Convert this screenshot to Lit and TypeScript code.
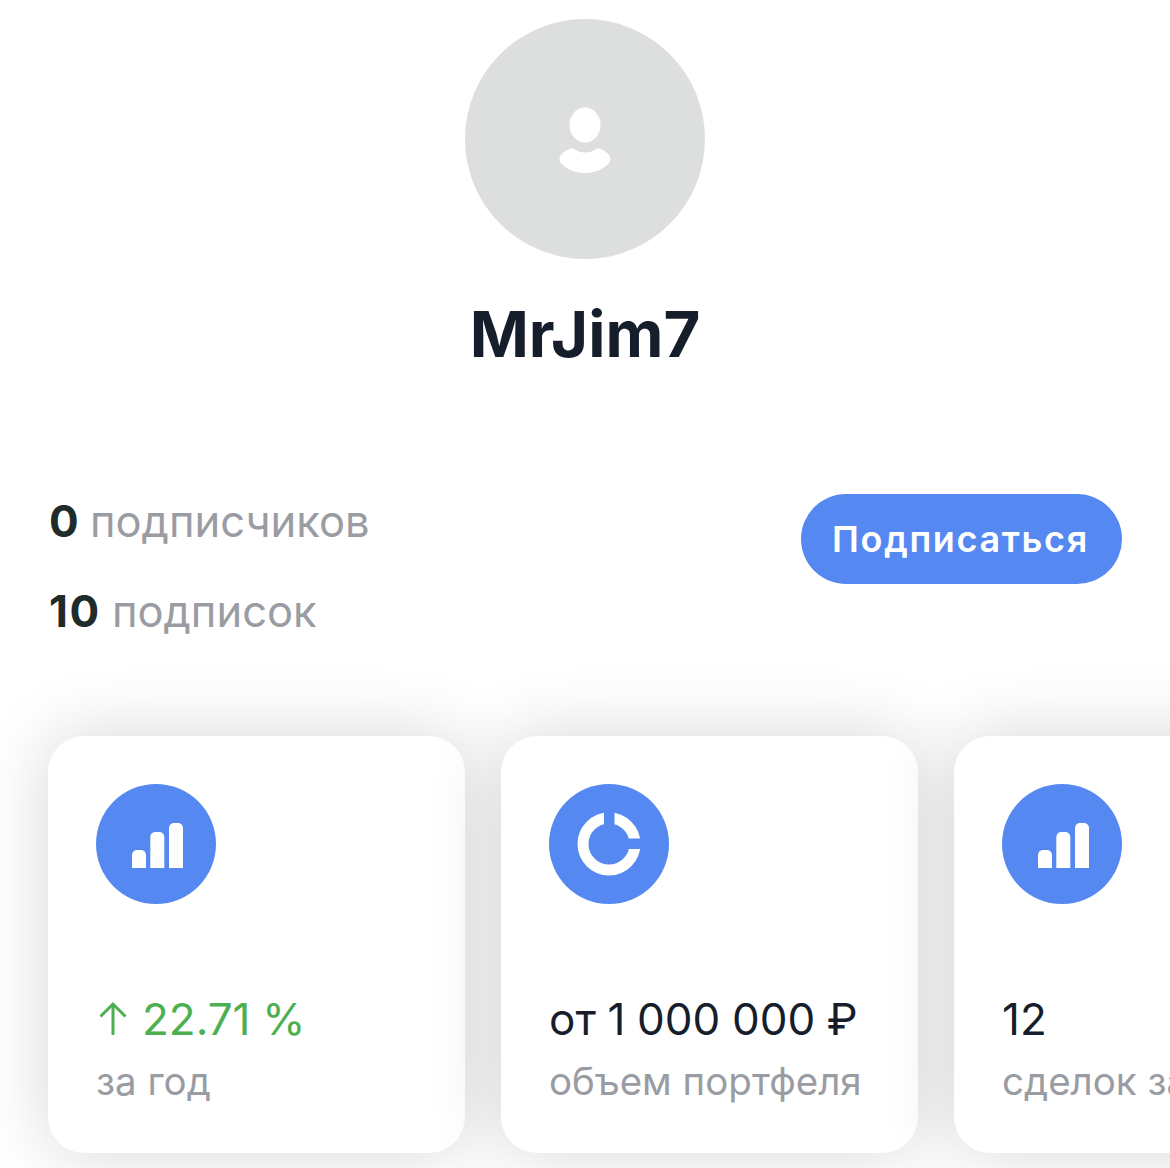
import { LitElement, html, css, svg } from 'lit';
import { customElement } from 'lit/decorators.js';

const barsIcon = svg`
  <path d="M36 84V71a5 5 0 0 1 5-5h4a5 5 0 0 1 5 5v13z" fill="#fff" />
  <path d="M54.300 84V53a5 5 0 0 1 5-5h4a5 5 0 0 1 5 5v31z" fill="#fff" />
  <path d="M73 84V44a5 5 0 0 1 5-5h4a5 5 0 0 1 5 5v40z" fill="#fff" />
`;

// ring with two square notches cut out in the background colour
const donutIcon = svg`
  <circle cx="60" cy="60" r="26" fill="none" stroke="#fff" stroke-width="11" />
  <rect x="55" y="20" width="10.500" height="26" fill="#5589f1" />
  <rect x="75" y="54.500" width="26" height="10.500" fill="#5589f1" />
`;

interface Stat {
  icon: unknown;
  value: string;
  label: string;
  up?: boolean;
}

const STATS: Stat[] = [
  { icon: barsIcon, value: '22.71 %', label: 'за год', up: true },
  { icon: donutIcon, value: 'от 1 000 000 ₽', label: 'объем портфеля' },
  { icon: barsIcon, value: '12', label: 'сделок за год' },
];

@customElement('app-root')
export class AppRoot extends LitElement {
  static styles = css`
    :host {
      display: block;
      width: 1170px;
      height: 1168px;
      overflow: hidden;
      background: #fff;
      font-family: Inter, 'Noto Sans', sans-serif;
    }
    .profile {
      display: flex;
      flex-direction: column;
      align-items: center;
      padding-top: 19px;
    }
    .avatar {
      width: 240px;
      height: 240px;
      border-radius: 50%;
      background: #dddfdf;
      display: flex;
      align-items: center;
      justify-content: center;
    }
    .avatar svg {
      margin-top: 3px;
    }
    .name {
      margin: 36px 0 0;
      font-size: 63.5px;
      line-height: 78px;
      font-weight: 700;
      color: #161d2b;
    }
    .follow {
      display: flex;
      justify-content: space-between;
      align-items: flex-start;
      padding: 0 48px 0 49px;
      margin-top: 121px;
    }
    .counts {
      display: flex;
      flex-direction: column;
      gap: 34px;
      margin-top: -1px;
    }
    .count {
      font-size: 43.5px;
      line-height: 56px;
      word-spacing: -1px;
      color: #9a9ca3;
    }
    .count b {
      font-size: 44px;
      font-weight: 700;
      color: #1f2c2a;
    }
    .count b.wide {
      letter-spacing: 1.5px;
    }
    .subscribe {
      width: 321px;
      height: 90px;
      padding: 0 2px 0 0;
      border: none;
      border-radius: 45px;
      background: #5589f1;
      color: #fff;
      font: 600 36px Inter, sans-serif;
      letter-spacing: 1.65px;
    }
    .cards {
      display: flex;
      gap: 36px;
      padding: 0 0 0 48px;
      margin-top: 97px;
    }
    .card {
      flex: none;
      box-sizing: border-box;
      width: 417px;
      height: 417px;
      padding: 48px;
      border-radius: 36px;
      background: #fff;
      box-shadow: 0 0 72px rgba(0, 0, 0, 0.16);
      display: flex;
      flex-direction: column;
    }
    .circle {
      display: block;
      flex: none;
      width: 120px;
      height: 120px;
      border-radius: 50%;
      background: #5589f1;
    }
    .value {
      margin-top: 88px;
      display: flex;
      align-items: center;
      gap: 14px;
      font-size: 44px;
      line-height: 54px;
      font-weight: 400;
      word-spacing: -0.75px;
      color: #161d2b;
      white-space: nowrap;
    }
    .value.up {
      color: #4caf50;
    }
    .label {
      margin-top: 12px;
      font-size: 38.5px;
      line-height: 46px;
      color: #9a9ca3;
      white-space: nowrap;
    }
  `;

  render() {
    return html`
      <div class="profile">
        <div class="avatar">
          <svg width="54" height="68" viewBox="0 0 54 68">
            <ellipse cx="27" cy="18" rx="15.5" ry="17.5" fill="#fff" />
            <path d="M1.500 52c0-5 8-10 13-11 4 3 8 4.500 12.500 4.500s9-1.500 12.500-4.500c5 1 13 6 13 11 0 6-12 14-25.500 14S1.500 58 1.500 52z" fill="#fff" />
          </svg>
        </div>
        <h1 class="name">MrJim7</h1>
      </div>
      <div class="follow">
        <div class="counts">
          <div class="count"><b>0</b> подписчиков</div>
          <div class="count"><b class="wide">10</b> подписок</div>
        </div>
        <button class="subscribe">Подписаться</button>
      </div>
      <div class="cards">
        ${STATS.map(
          (s) => html`
            <div class="card">
              <svg class="circle" viewBox="0 0 120 120">${s.icon}</svg>
              <div class="value ${s.up ? 'up' : ''}">
                ${s.up
                  ? html`<svg width="32" height="36" viewBox="0 0 32 36">
                      <path d="M17 34V3M4.500 15.500 17 3l12.500 12.500" fill="none" stroke="#4caf50" stroke-width="3" />
                    </svg>`
                  : null}
                <span>${s.value}</span>
              </div>
              <div class="label">${s.label}</div>
            </div>
          `
        )}
      </div>
    `;
  }
}
